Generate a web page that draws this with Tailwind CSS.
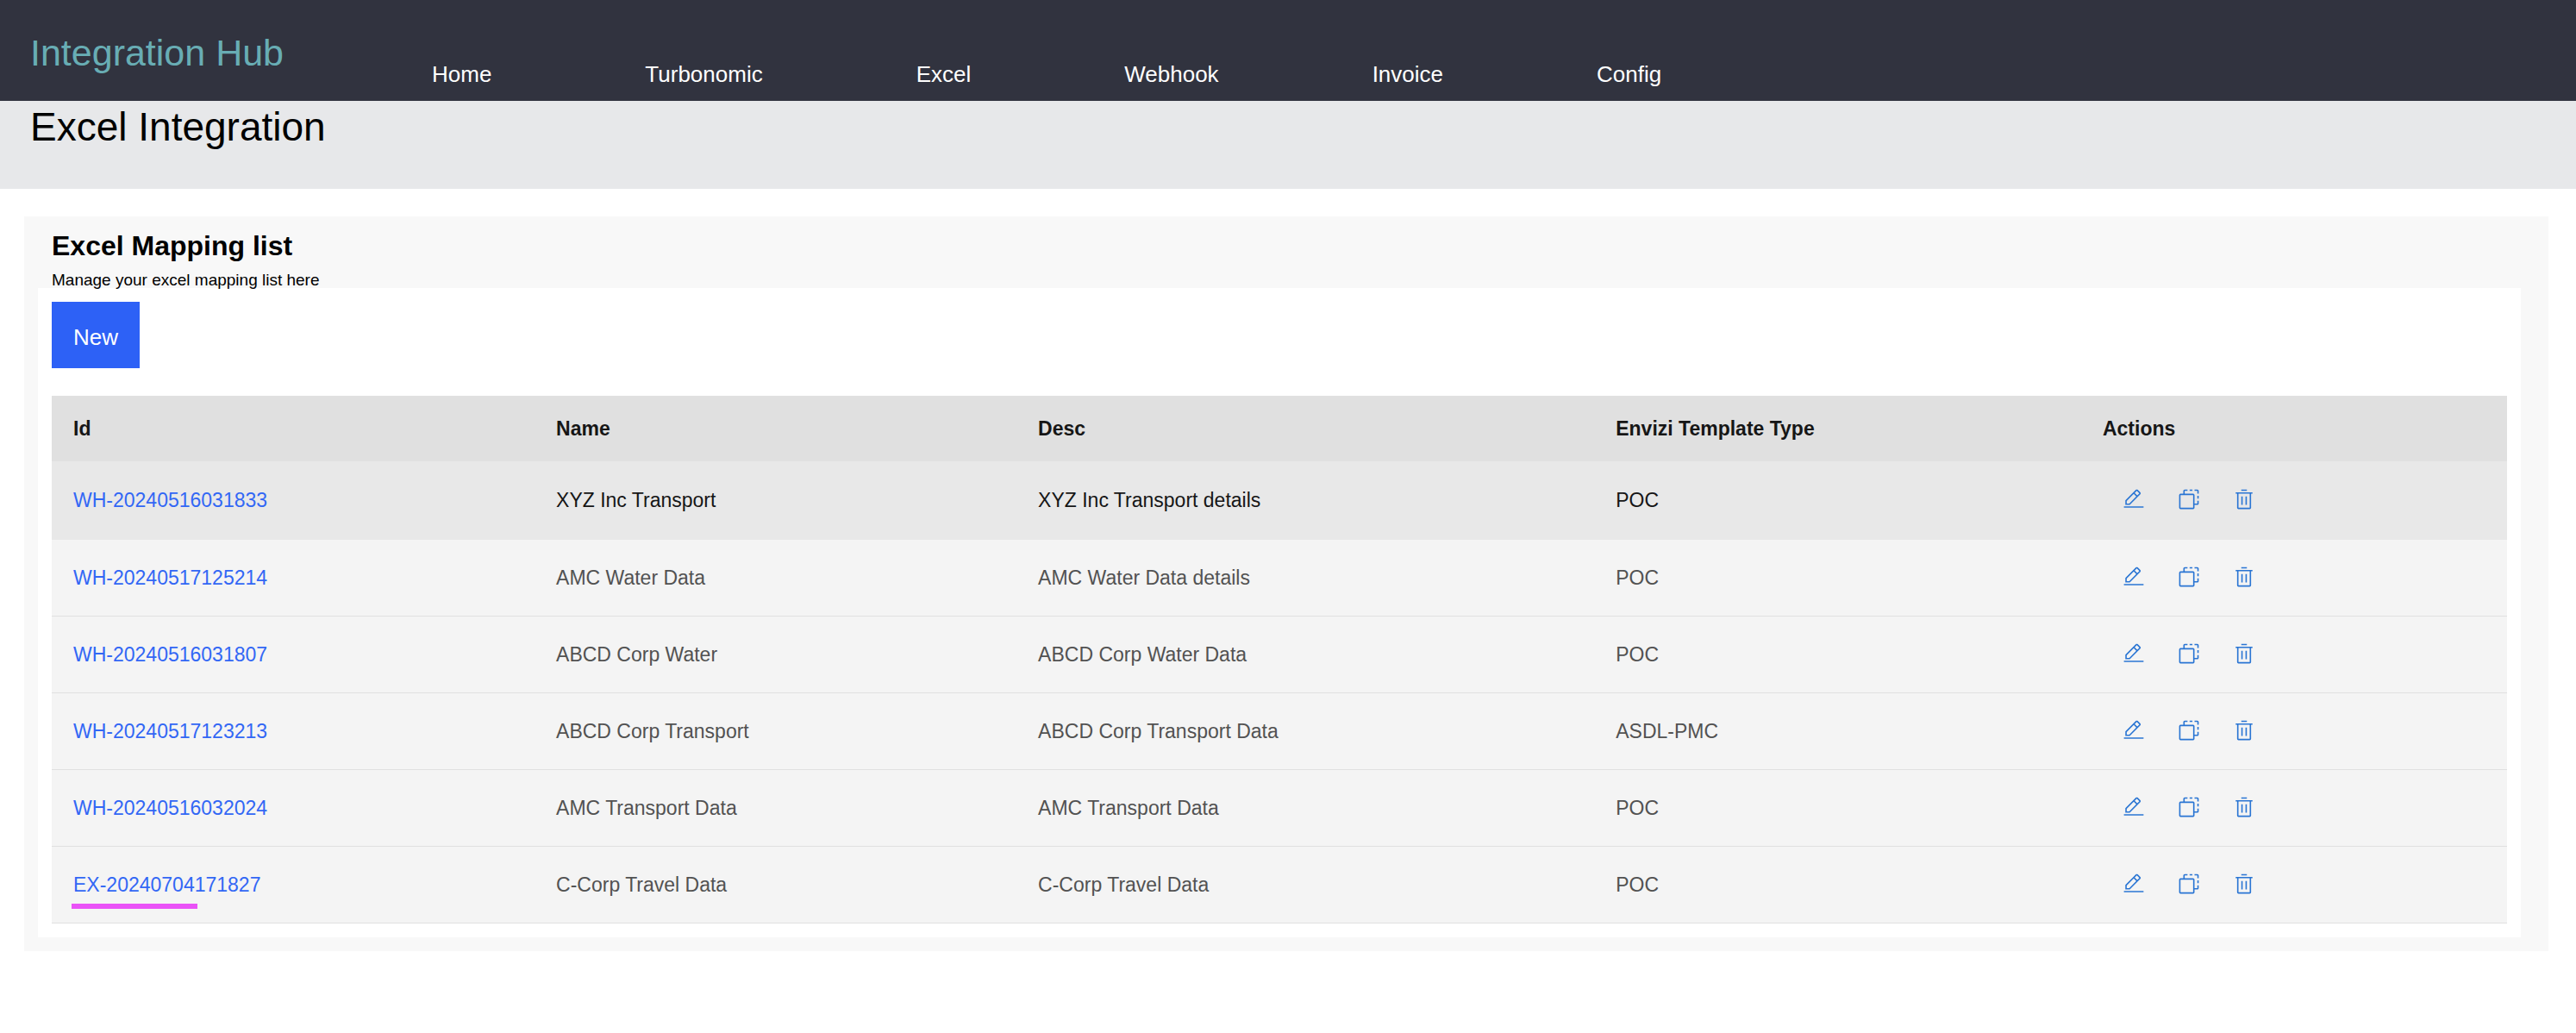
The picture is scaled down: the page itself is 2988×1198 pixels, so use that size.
<!DOCTYPE html>
<html lang="en">
<head>
    <meta charset="UTF-8">
    <meta name="viewport" content="width=device-width, initial-scale=1.0">
    <title>Integration Hub</title>
    <script src="https://cdn.jsdelivr.net/npm/@tailwindcss/browser@4"></script>
</head>
<body class="bg-white text-black font-['Liberation_Sans',Arial,sans-serif]">
    <!-- Shared icons -->
    <svg class="hidden">
        <symbol id="icon-edit" viewBox="0 0 32 32">
            <path d="M2 26h28v2H2zM25.4 9c.8-.8.8-2 0-2.8l-3.6-3.6c-.8-.8-2-.8-2.8 0l-15 15V24h6.4l15-15zM20.4 4 24 7.6l-3 3L17.4 7l3-3zM6 22v-3.6l10-10 3.6 3.6-10 10H6z" />
        </symbol>
        <symbol id="icon-copy" viewBox="0 0 32 32">
            <path d="M22 10v18H4V10h18m0-2H4a2 2 0 0 0-2 2v18a2 2 0 0 0 2 2h18a2 2 0 0 0 2-2V10a2 2 0 0 0-2-2zM8 8V4a2 2 0 0 1 2-2h4v2h-4v4zM17 2h4v2h-4zM24 2h4a2 2 0 0 1 2 2v4h-2V4h-4zM28 11h2v4h-2zM28 18h2v4a2 2 0 0 1-2 2h-4v-2h4z" />
        </symbol>
        <symbol id="icon-trash" viewBox="0 0 32 32">
            <path d="M12 12h2v12h-2zM18 12h2v12h-2zM4 6v2h2v20a2 2 0 0 0 2 2h16a2 2 0 0 0 2-2V8h2V6zm4 22V8h16v20zM12 2h8v2h-8z" />
        </symbol>
    </svg>

    <!-- Navbar -->
    <header class="bg-[#31333f] flex items-start h-[117px] pl-[35px]">
        <a href="#" class="w-[466px] pt-9 text-[43px] leading-[50px] text-[#68adb4]">Integration Hub</a>
        <nav class="flex gap-[178px] pt-[71px] text-[26px] leading-[30px] text-white">
            <a href="#">Home</a>
            <a href="#">Turbonomic</a>
            <a href="#">Excel</a>
            <a href="#">Webhook</a>
            <a href="#">Invoice</a>
            <a href="#">Config</a>
        </nav>
    </header>

    <!-- Page Header -->
    <div class="bg-[#e7e8ea] h-[102px] pl-[35px] pt-1">
        <h1 class="text-[46px] leading-[52px]">Excel Integration</h1>
    </div>

    <!-- Mapping List -->
    <main class="mt-8 ml-7 mr-8 bg-[#f8f8f8] pl-4 pr-8 pb-4 pt-[14px]">
        <h2 class="pl-4 text-[32px] leading-[40px] font-bold">Excel Mapping list</h2>
        <p class="pl-4 pt-2 h-[29px] text-[19px] leading-[24px]">Manage your excel mapping list here</p>
        <div class="bg-white p-4">
            <button type="button" class="block bg-[#2d61f6] text-white text-[26px] leading-[30px] px-[25px] pt-[26px] pb-[21px]">New</button>
            <table class="mt-8 w-full table-fixed text-left text-[23px] leading-[28px]">
                <colgroup>
                    <col class="w-[19.63%]">
                    <col class="w-[19.63%]">
                    <col class="w-[23.53%]">
                    <col class="w-[19.83%]">
                    <col>
                </colgroup>
                <thead class="bg-[#e0e0e0] text-[#161616]">
                    <tr class="h-[76px]">
                        <th class="px-[25px]">Id</th>
                        <th class="px-[26px]">Name</th>
                        <th class="px-[26px]">Desc</th>
                        <th class="px-[26px]">Envizi Template Type</th>
                        <th class="px-[26px]">Actions</th>
                    </tr>
                </thead>
                <tbody id="mappings" class="text-[#525252]"></tbody>
            </table>
        </div>
    </main>

    <script>
        const mappings = [
            { id: 'WH-20240516031833', name: 'XYZ Inc Transport', desc: 'XYZ Inc Transport details', type: 'POC', active: true },
            { id: 'WH-20240517125214', name: 'AMC Water Data', desc: 'AMC Water Data details', type: 'POC' },
            { id: 'WH-20240516031807', name: 'ABCD Corp Water', desc: 'ABCD Corp Water Data', type: 'POC' },
            { id: 'WH-20240517123213', name: 'ABCD Corp Transport', desc: 'ABCD Corp Transport Data', type: 'ASDL-PMC' },
            { id: 'WH-20240516032024', name: 'AMC Transport Data', desc: 'AMC Transport Data', type: 'POC' },
            { id: 'EX-20240704171827', name: 'C-Corp Travel Data', desc: 'C-Corp Travel Data', type: 'POC', marked: true },
        ];

        const rowClass = (row) => row.active
            ? 'h-[90px] bg-[#e8e8e8] text-[#161616] border-b border-[#e8e8e8]'
            : 'h-[89px] bg-[#f4f4f4] border-b border-[#e0e0e0]';

        const action = (label, icon) => `
            <button type="button" aria-label="${label}">
                <svg class="block size-[26px] fill-[#2a75d3]"><use href="#${icon}" /></svg>
            </button>`;

        document.getElementById('mappings').innerHTML = mappings.map((row) => `
            <tr class="${rowClass(row)}">
                <td class="px-[25px]">
                    <div class="relative">
                        <a href="#" class="text-[#3267f5]">${row.id}</a>
                        ${row.marked ? '<span class="absolute -left-0.5 top-9 w-[146px] h-[6px] bg-[#ea52f7]"></span>' : ''}
                    </div>
                </td>
                <td class="px-[26px]">${row.name}</td>
                <td class="px-[26px]">${row.desc}</td>
                <td class="px-[26px]">${row.type}</td>
                <td class="px-[26px]">
                    <div class="flex gap-[38px] pl-[23px] pb-[2px]">
                        ${action('Edit', 'icon-edit')}
                        ${action('Copy', 'icon-copy')}
                        ${action('Delete', 'icon-trash')}
                    </div>
                </td>
            </tr>`).join('');
    </script>
</body>
</html>
